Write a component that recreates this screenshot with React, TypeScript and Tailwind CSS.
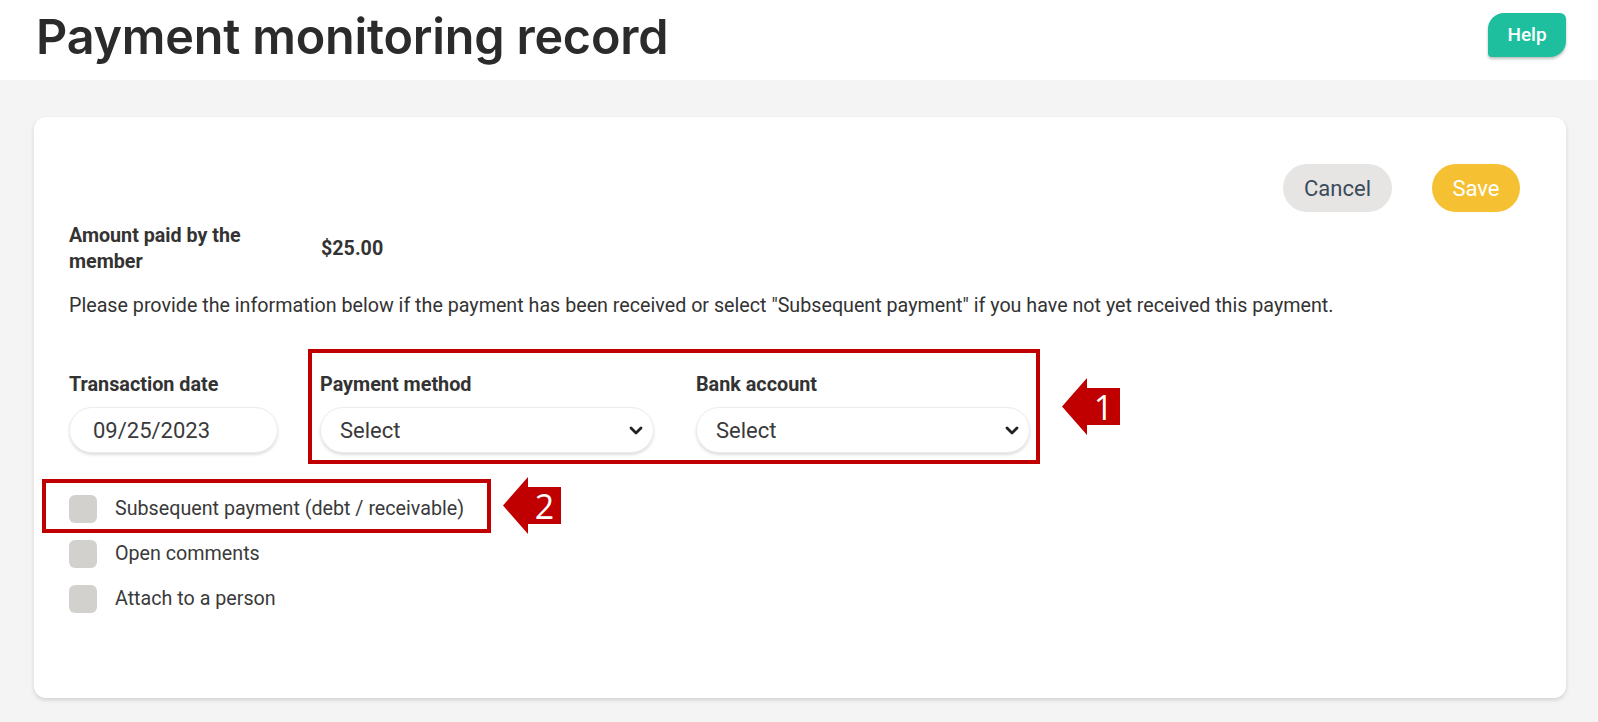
import React from "react";

function Chevron() {
  return (
    <svg width="14" height="9" viewBox="0 0 14 9" className="shrink-0">
      <polyline points="2,2 7,7 12,2" fill="none" stroke="#222" strokeWidth="2.8" strokeLinecap="round" strokeLinejoin="round" />
    </svg>
  );
}

function Arrow({ n, className }: { n: string; className: string }) {
  return (
    <div className={"absolute w-[58px] h-[57px] " + className}>
      <svg width="58" height="57" viewBox="0 0 58 57" className="absolute inset-0">
        <polygon points="0,28.5 25,0 25,10 58,10 58,47 25,47 25,57" fill="#c00000" />
      </svg>
      <span className="absolute left-[25px] top-[10px] w-[33px] h-[37px] flex items-center justify-center text-white text-[34px] leading-none font-['Open_Sans',sans-serif]">
        {n}
      </span>
    </div>
  );
}

function Check({ label }: { label: string }) {
  return (
    <div className="flex items-center h-[28px]">
      <div className="w-[28px] h-[28px] rounded-[6px] bg-[#d3d1ce]" />
      <span className="ml-[18px] text-[19.7px] leading-[26px] text-[#3a3a3a]">{label}</span>
    </div>
  );
}

function SelectBox() {
  return (
    <div className="h-[46px] w-full rounded-full bg-white border border-[#ececec] shadow-[0_2px_3px_rgba(0,0,0,0.13)] flex items-center justify-between pl-[19px] pr-[10px]">
      <span className="text-[22px] text-[#3a3a3a]">Select</span>
      <Chevron />
    </div>
  );
}

export default function App() {
  return (
    <div className="min-h-screen bg-[#f4f4f4] font-['Roboto',sans-serif] text-[#333]">
      <header className="h-[80px] bg-white flex items-center justify-between pl-[36px] pr-[32px]">
        <h1 className="font-['Inter',sans-serif] font-semibold text-[48.5px] leading-none tracking-[-0.2px] text-[#2b2b2b] -mt-[6px]">
          Payment monitoring record
        </h1>
        <button className="-mt-[10px] w-[78px] h-[44px] bg-[#1dbf9f] text-white text-[19px] font-medium rounded-tl-[16px] rounded-br-[16px] rounded-tr-[6px] rounded-bl-[4px] shadow-[0_2px_3px_rgba(0,0,0,0.25)]">
          Help
        </button>
      </header>
      <main className="pl-[34px] pr-[32px] pt-[37px]">
        <div className="relative h-[581px] bg-white rounded-[12px] shadow-[0_2px_4px_rgba(0,0,0,0.14)] pl-[35px] pr-[46px] pt-[47px]">
          <div className="flex justify-end gap-[40px]">
            <button className="w-[109px] h-[48px] rounded-full bg-[#e6e5e3] text-[22px] text-[#3b4a5a]">Cancel</button>
            <button className="w-[88px] h-[48px] rounded-full bg-[#f5c133] text-[22px] text-white">Save</button>
          </div>
          <div className="mt-[11px] flex items-center">
            <div className="w-[252px] pr-[40px] text-[19.7px] leading-[26px] font-bold text-[#333]">Amount paid by the member</div>
            <div className="text-[19.7px] font-bold text-[#333]">$25.00</div>
          </div>
          <p className="mt-[18px] text-[19.7px] leading-[26px] text-[#333]">
            Please provide the information below if the payment has been received or select "Subsequent payment" if you have not yet received this payment.
          </p>
          <div className="mt-[53px] flex gap-[42px]">
            <div className="w-[209px]">
              <div className="text-[19.8px] leading-[26px] font-bold text-[#333]">Transaction date</div>
              <div className="mt-[9px] h-[46px] rounded-full bg-white border border-[#ececec] shadow-[0_2px_3px_rgba(0,0,0,0.13)] flex items-center pl-[23px]">
                <span className="text-[22px] text-[#3a3a3a]">09/25/2023</span>
              </div>
            </div>
            <div className="w-[334px]">
              <div className="text-[19.8px] leading-[26px] font-bold text-[#333]">Payment method</div>
              <div className="mt-[9px]"><SelectBox /></div>
            </div>
            <div className="w-[334px]">
              <div className="text-[19.8px] leading-[26px] font-bold text-[#333]">Bank account</div>
              <div className="mt-[9px]"><SelectBox /></div>
            </div>
          </div>
          <div className="mt-[42px] flex flex-col gap-[17px]">
            <Check label="Subsequent payment (debt / receivable)" />
            <Check label="Open comments" />
            <Check label="Attach to a person" />
          </div>

          <div className="absolute left-[274px] top-[232px] w-[732px] h-[115px] border-[4px] border-[#c00000]" />
          <Arrow n="1" className="left-[1028px] top-[261px]" />
          <div className="absolute left-[8px] top-[362px] w-[449px] h-[54px] border-[4px] border-[#c00000]" />
          <Arrow n="2" className="left-[469px] top-[360px]" />
        </div>
      </main>
    </div>
  );
}
